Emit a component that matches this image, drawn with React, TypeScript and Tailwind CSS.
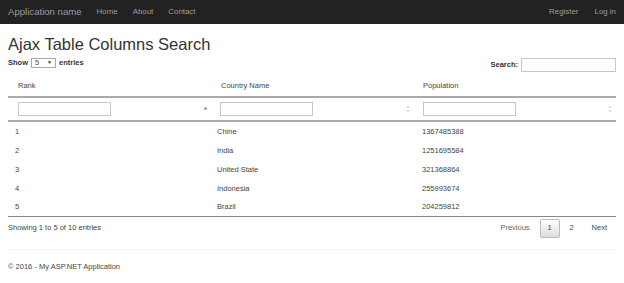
import React from "react";

const rows = [
  ["1", "Chine", "1367485388"],
  ["2", "India", "1251695584"],
  ["3", "United State", "321368864"],
  ["4", "Indonesia", "255993674"],
  ["5", "Brazil", "204259812"],
];

function SortBoth() {
  return (
    <svg width="4" height="8" viewBox="0 0 4 8" className="block">
      <path d="M2 0.5 L3.6 3 L0.4 3 Z" fill="#d6d6d6" />
      <path d="M2 7.5 L3.6 5 L0.4 5 Z" fill="#d6d6d6" />
    </svg>
  );
}

function SortAsc() {
  return (
    <svg width="5" height="8" viewBox="0 0 5 8" className="block">
      <path d="M2.5 1.5 L4.5 4.5 L0.5 4.5 Z" fill="#8c8cc8" />
    </svg>
  );
}

export default function App() {
  const cols = "grid grid-cols-[203px_203px_202px]";
  return (
    <div
      className="w-[624px] h-[283px] bg-white text-[#333] overflow-hidden"
      style={{ fontFamily: '"Liberation Sans", Arial, sans-serif' }}
    >
      {/* navbar */}
      <div className="h-[24px] bg-[#222] flex items-center justify-between px-[8px] text-[#9d9d9d]">
        <div className="flex items-center">
          <span className="text-[9.6px] mr-[15px]">Application name</span>
          <div className="flex items-center gap-[15px] text-[7.9px]">
            <span>Home</span>
            <span>About</span>
            <span>Contact</span>
          </div>
        </div>
        <div className="flex items-center gap-[16px] text-[7.9px]">
          <span>Register</span>
          <span>Log in</span>
        </div>
      </div>

      <div className="px-[8px]">
        <h2 className="mt-[11px] text-[16.5px] leading-[18px] text-[#333]">
          Ajax Table Columns Search
        </h2>

        {/* length + filter */}
        <div className="mt-[4px] h-[16px] flex justify-between">
          <div className="flex items-center h-[10px] mt-[1px] text-[7.5px] font-bold gap-[3px]">
            <span>Show</span>
            <div className="w-[25px] h-[10px] border border-[#a9a9a9] flex items-center justify-between px-[3px] font-normal text-[7.5px] text-[#555]">
              <span>5</span>
              <span className="text-[5px] text-[#333]">▼</span>
            </div>
            <span>entries</span>
          </div>
          <div className="flex items-center h-[15px] mt-[0.5px] text-[7.5px] font-bold gap-[3px]">
            <span>Search:</span>
            <div className="w-[95px] h-[14px] border border-[#c8c8c8]" />
          </div>
        </div>

        {/* table */}
        <div className="text-[7.5px]">
          <div className={`${cols} h-[22px] mt-[3px] items-center border-b-2 border-[#aaa] text-[#444]`}>
            <div className="pl-[10px]">Rank</div>
            <div className="pl-[10px]">Country Name</div>
            <div className="pl-[9px]">Population</div>
          </div>
          <div className={`${cols} h-[24px] items-center border-b-2 border-[#aaa]`}>
            <div className="flex items-center justify-between pl-[10px] pr-[3px]">
              <div className="w-[93px] h-[14px] border border-[#c8c8c8]" />
              <SortAsc />
            </div>
            <div className="flex items-center justify-between pl-[9px] pr-[4px]">
              <div className="w-[93px] h-[14px] border border-[#c8c8c8]" />
              <SortBoth />
            </div>
            <div className="flex items-center justify-between pl-[9px] pr-[4px]">
              <div className="w-[93px] h-[14px] border border-[#c8c8c8]" />
              <SortBoth />
            </div>
          </div>
          {rows.map((r, i) => (
            <div
              key={i}
              className={`${cols} h-[19px] items-center text-[#444] ${i === rows.length - 1 ? "border-b border-[#888]" : ""}`}
            >
              <div className="pl-[7px]">{r[0]}</div>
              <div className="pl-[6px]">{r[1]}</div>
              <div className="pl-[8px]">{r[2]}</div>
            </div>
          ))}
        </div>

        {/* info + pagination */}
        <div className="h-[22px] flex items-center justify-between text-[7.5px] text-[#444]">
          <span>Showing 1 to 5 of 10 entries</span>
          <div className="flex items-center gap-[2px]">
            <span className="px-[8px] h-[18px] flex items-center text-[#666]">Previous</span>
            <span className="w-[20px] h-[19px] flex items-center justify-center border border-[#bbb] rounded-[2px] bg-gradient-to-b from-white to-[#dcdcdc]">
              1
            </span>
            <span className="w-[20px] h-[18px] flex items-center justify-center">2</span>
            <span className="pl-[8px] pr-[9px] h-[18px] flex items-center">Next</span>
          </div>
        </div>

        <div className="mt-[10px] border-t border-[#eee]" />
        <div className="mt-[12px] text-[7.5px] text-[#444] leading-[10px]">
          © 2016 - My ASP.NET Application
        </div>
      </div>
    </div>
  );
}
